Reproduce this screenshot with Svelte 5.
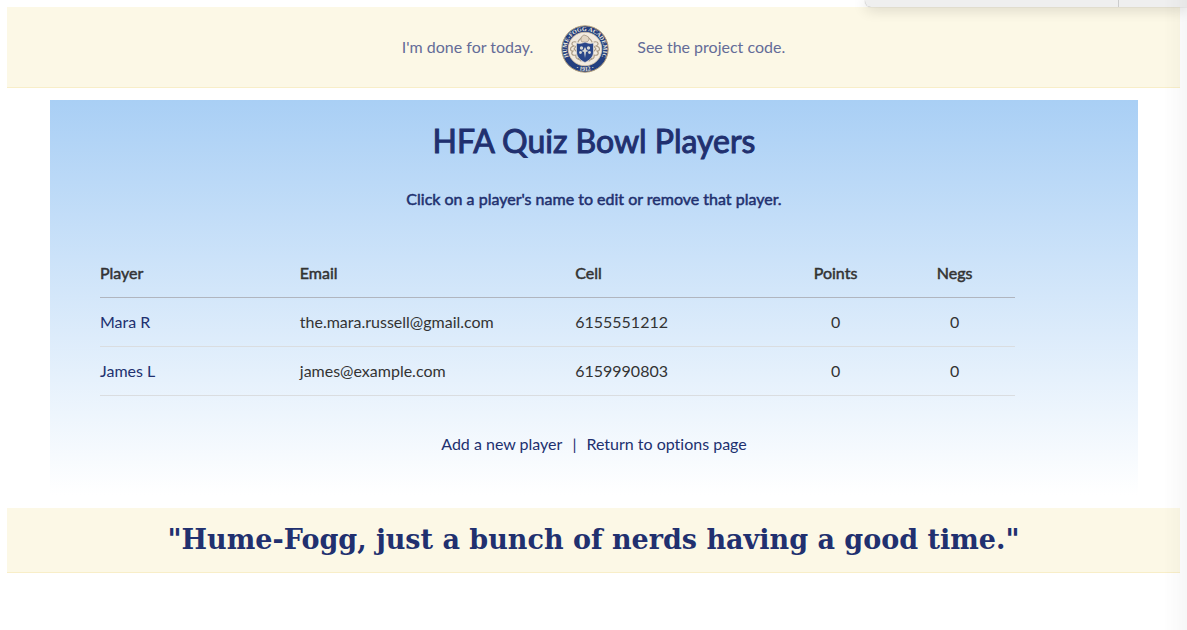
<script>
  const players = [
    { name: 'Mara R', email: 'the.mara.russell@gmail.com', cell: '6155551212', points: 0, negs: 0 },
    { name: 'James L', email: 'james@example.com', cell: '6159990803', points: 0, negs: 0 }
  ];
</script>

<div class="page">
  <header class="band top">
    <a href="#logout">I'm done for today.</a>
    <svg class="seal" viewBox="0 0 48 48" role="img" aria-label="Hume-Fogg Academic seal">
      <defs>
        <path id="ring-top" d="M10.4 36.1A18.2 18.2 0 1 1 37.6 36.1" />
        <path id="ring-bottom" d="M12 42.4A22 22 0 0 0 36 42.4" />
      </defs>
      <circle cx="24" cy="24" r="23.2" fill="#243f80" stroke="#b49f7b" stroke-width="1" />
      <circle cx="24" cy="24" r="16.8" fill="#f2eadf" stroke="#d8c5a5" stroke-width=".8" />
      <text class="ring"><textPath href="#ring-top" startOffset="50%">HUME-FOGG ACADEMIC</textPath></text>
      <text class="ring"><textPath href="#ring-bottom" startOffset="50%">· 1912 ·</textPath></text>
      <g fill="none" stroke="#ab9c86" stroke-width="1.1" stroke-linecap="round">
        <path d="M15 17c-5-1-5 3-2 4-5 1-4 5-1 5-3 3 0 5 3 4-1 4 3 5 5 4" />
        <path d="M33 17c5-1 5 3 2 4 5 1 4 5 1 5 3 3 0 5-3 4 1 4-3 5-5 4" />
        <path d="M16 20l-3 4 3 3M32 20l3 4-3 3M17 33l3 3M31 33l-3 3" />
        <path d="M17 17c1-3 3-3 4-5M31 17c-1-3-3-3-4-5" />
      </g>
      <path d="M21 17c-2-2-1-6 2-7l3 1c3 2 2 5 0 6z" fill="#e2d6c4" stroke="#9c8e7c" stroke-width=".7" />
      <path d="M15.5 18c3.5 1 6 0 8.500-1 2.500 1 5 2 8.500 1v9c0 5-4 8.500-8.500 10.500-4.500-2-8.500-5.500-8.500-10.500z" fill="#29468a" stroke="#e8e2d8" stroke-width=".7" />
      <g fill="#d7d8d3">
        <circle cx="20.500" cy="23" r="1.700" /><circle cx="27.500" cy="23" r="1.700" />
        <circle cx="19.500" cy="27.500" r="1.400" /><circle cx="28.500" cy="27.500" r="1.400" />
        <path d="M24 22l1.500 3L27.500 26l-2.500 1L24 33l-1-6-2.500-1 2-1z" />
      </g>
    </svg>
    <a href="#code">See the project code.</a>
  </header>

  <main>
    <h1>HFA Quiz Bowl Players</h1>
    <h2>Click on a player's name to edit or remove that player.</h2>
    <table>
      <colgroup>
        <col class="c-name" /><col class="c-email" /><col class="c-cell" /><col class="c-points" /><col class="c-negs" />
      </colgroup>
      <thead>
        <tr><th>Player</th><th>Email</th><th>Cell</th><th class="num">Points</th><th class="num">Negs</th></tr>
      </thead>
      <tbody>
        {#each players as p}
          <tr>
            <td><a href="#edit">{p.name}</a></td>
            <td>{p.email}</td>
            <td>{p.cell}</td>
            <td class="num">{p.points}</td>
            <td class="num">{p.negs}</td>
          </tr>
        {/each}
      </tbody>
    </table>
    <nav>
      <a href="#new">Add a new player</a><span>|</span><a href="#options">Return to options page</a>
    </nav>
  </main>

  <footer class="band">"Hume-Fogg, just a bunch of nerds having a good time."</footer>
</div>
<div class="panel"><span></span></div>
<div class="edge"></div>

<style>
  :global(body) { background: #fff; overflow-x: hidden; }
  .page {
    padding: 7px;
    font: 16px/24px Lato, sans-serif;
    font-variant-ligatures: none;
    color: #333;
  }
  a { color: #21306f; text-decoration: none; }
  .band {
    display: flex;
    align-items: center;
    justify-content: center;
    background: #fcf8e6;
    border-bottom: 1px solid #f8eec8;
    color: #21306f;
  }
  .top { gap: 28px; height: 80px; }
  .top a { color: #646c98; }
  .seal { width: 48px; height: 48px; margin-top: 4px; }
  .ring {
    font: bold 6px "Liberation Serif", serif;
    fill: #f0ecdf;
    text-anchor: middle;
  }
  main {
    margin: 12px 42px 13px 43px;
    padding: 19px 50px 39px;
    background: linear-gradient(#a9cff5, #fff);
  }
  h1, h2 {
    margin: 0;
    text-align: center;
    color: #21306f;
    font-weight: 400;
    -webkit-text-stroke: 1px #21306f;
  }
  h1 { font-size: 32px; line-height: 44px; }
  h2 { font-size: 16px; line-height: 24px; margin-top: 24px; -webkit-text-stroke-width: 0.5px; }
  table {
    width: 92.6%;
    margin-top: 38px;
    border-collapse: collapse;
    table-layout: fixed;
  }
  .c-name { width: 20.2%; }
  .c-email { width: 30.1%; }
  .c-cell { width: 25.3%; }
  .c-points { width: 9.6%; }
  .c-negs { width: 14.8%; }
  th, td {
    padding: 12px 15px;
    text-align: left;
    border-bottom: 1px solid #dadde0;
  }
  th {
    font-weight: 400;
    -webkit-text-stroke: 0.5px #333;
    border-bottom-color: #b0b5bf;
  }
  th:first-child, td:first-child { padding-left: 0; }
  th:last-child, td:last-child { padding-right: 0; }
  th.num, td.num { text-align: center; }
  nav {
    display: flex;
    justify-content: center;
    gap: 10px;
    margin-top: 36px;
    color: #21306f;
  }
  footer {
    padding: 16px 0;
    font: bold 27px/32px "DejaVu Serif", serif;
  }
  .panel {
    position: absolute;
    top: 0;
    right: 0;
    width: 322px;
    height: 7px;
    display: flex;
    justify-content: flex-end;
    background: #efefef;
    border-radius: 0 0 0 6px;
    box-shadow: 0 0 1px #999, 0 2px 14px rgba(0, 0, 0, 0.2);
  }
  .panel span { width: 68px; border-left: 1px solid #ccc; }
  .edge {
    position: fixed;
    inset: 0 0 0 auto;
    width: 24px;
    background: linear-gradient(to right, transparent, rgba(0, 0, 0, 0.03));
    pointer-events: none;
  }
</style>
